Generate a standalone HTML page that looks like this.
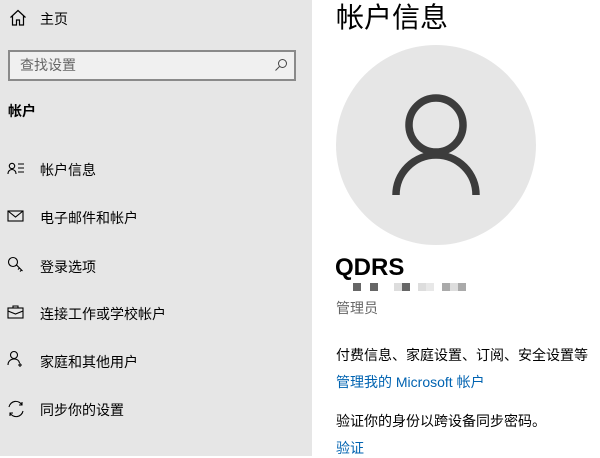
<!DOCTYPE html>
<html><head><meta charset="utf-8"><style>
body{margin:0;width:600px;height:456px;overflow:hidden;background:#fff;font-family:"Liberation Sans","Noto Sans CJK SC",sans-serif;position:relative}
.side{position:absolute;left:0;top:0;width:312px;height:456px;background:#e6e6e6}
.t{position:absolute;font-size:14px;color:#000;white-space:nowrap;line-height:20px}
.search{position:absolute;left:8px;top:50px;width:284px;height:27px;border:2px solid #8a8a8a;background:#f0f0f0;box-sizing:content-box}
svg.i{position:absolute}
.sq{position:absolute;top:283px;width:8px;height:8px}
</style></head><body>
<div class="side">
<svg class="i" style="left:9px;top:9px" width="18" height="18" viewBox="0 0 18 18" fill="none" stroke="#000" stroke-width="1.2"><path d="M1.5 8.5L9 1.5L16.5 8.5M3.5 7v9h4v-5h3v5h4V7"/></svg>
<div class="t" style="left:40px;top:9px">主页</div>
<div class="search"><div class="t" style="left:10px;top:3px;color:#666">查找设置</div>
<svg class="i" style="left:264px;top:6px" width="14" height="14" viewBox="0 0 14 14" fill="none" stroke="#444" stroke-width="1"><circle cx="8.5" cy="5.5" r="4"/><path d="M5.5 8.5L1.5 12.5"/></svg></div>
<div class="t" style="left:8px;top:101px;font-weight:bold">帐户</div>
<svg class="i" style="left:7px;top:162px" width="18" height="14" viewBox="0 0 18 14" fill="none" stroke="#000" stroke-width="1.1"><circle cx="5" cy="4" r="2.7"/><path d="M1 12c0-3 2-4.5 4-4.5s4 1.5 4 4.5M11 2h6M11 6h6M11 10h6"/></svg>
<div class="t" style="left:40px;top:160px">帐户信息</div>
<svg class="i" style="left:7px;top:210px" width="18" height="12" viewBox="0 0 18 12" fill="none" stroke="#000" stroke-width="1.1"><rect x="1" y="1" width="15" height="10"/><path d="M1 1l7.5 6L16 1"/></svg>
<div class="t" style="left:40px;top:208px">电子邮件和帐户</div>
<svg class="i" style="left:7px;top:256px" width="18" height="18" viewBox="0 0 18 18" fill="none" stroke="#000" stroke-width="1.1"><circle cx="6" cy="6" r="4.5"/><path d="M9.5 9l6 6M12.5 12l-1.5 1.5M14.5 14l-1.5 1.5"/></svg>
<div class="t" style="left:40px;top:257px">登录选项</div>
<svg class="i" style="left:7px;top:305px" width="18" height="14" viewBox="0 0 18 14" fill="none" stroke="#000" stroke-width="1.1"><rect x="1" y="3" width="15" height="10"/><path d="M6 3V1h5v2M1 6l7.5 3L16 6"/></svg>
<div class="t" style="left:40px;top:304px">连接工作或学校帐户</div>
<svg class="i" style="left:7px;top:350px" width="18" height="18" viewBox="0 0 18 18" fill="none" stroke="#000" stroke-width="1.1"><circle cx="7" cy="5" r="3.5"/><path d="M1 15c0-4 3-6 6-6s5 1.5 5.5 4M13 13v4M11 15h4"/></svg>
<div class="t" style="left:40px;top:352px">家庭和其他用户</div>
<svg class="i" style="left:7px;top:400px" width="18" height="18" viewBox="0 0 18 18" fill="none" stroke="#000" stroke-width="1.1"><path d="M2 7a7 7 0 0 1 13-2M16 11a7 7 0 0 1-13 2M15 2v3h-3M3 16v-3h3"/></svg>
<div class="t" style="left:40px;top:400px">同步你的设置</div>
</div>
<div class="t" style="left:336px;top:0px;font-size:28px;line-height:36px">帐户信息</div>
<svg class="i" style="left:336px;top:45px" width="200" height="200" viewBox="0 0 200 200"><circle cx="100" cy="100" r="100" fill="#e6e6e6"/><circle cx="100" cy="80" r="27" fill="none" stroke="#3c3c3c" stroke-width="7.5"/><path d="M60 150a40 40 0 0 1 80 0" fill="none" stroke="#3c3c3c" stroke-width="7.5"/></svg>
<div class="t" style="left:335px;top:253px;font-size:24px;line-height:30px;font-weight:bold">QDRS</div>
<div class="sq" style="left:353px;background:#666"></div>
<div class="sq" style="left:370px;background:#666"></div>
<div class="sq" style="left:394px;background:#ddd"></div>
<div class="sq" style="left:402px;background:#666"></div>
<div class="sq" style="left:418px;background:#ddd"></div>
<div class="sq" style="left:426px;background:#e8e8e8"></div>
<div class="sq" style="left:442px;background:#aaa"></div>
<div class="sq" style="left:450px;background:#ddd"></div>
<div class="sq" style="left:458px;background:#aaa"></div>
<div class="t" style="left:336px;top:298px;color:#666">管理员</div>
<div class="t" style="left:336px;top:345px">付费信息、家庭设置、订阅、安全设置等</div>
<div class="t" style="left:336px;top:372px;color:#0063b1">管理我的 Microsoft 帐户</div>
<div class="t" style="left:336px;top:411px">验证你的身份以跨设备同步密码。</div>
<div class="t" style="left:336px;top:438px;color:#0063b1">验证</div>
</body></html>
